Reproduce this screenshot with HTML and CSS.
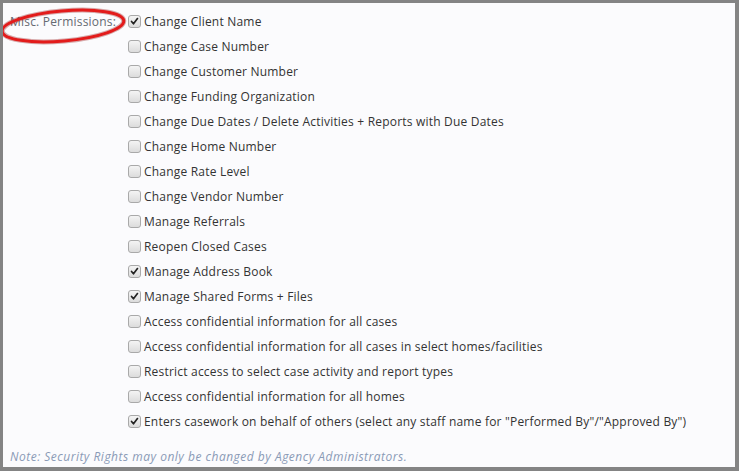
FILE: index.html
```html
<!DOCTYPE html>
<html>
<head>
<meta charset="utf-8">
<link rel="stylesheet" href="styles.css">
</head>
<body>
<div class="frame">
  <div class="perm">
    <div class="label">Misc. Permissions:</div>
    <ul class="list">
      <li><span class="cb on"><svg viewBox="0 0 13 13"><path d="M3 6.5 L5.3 9.2 L10 3" /></svg></span>Change Client Name</li>
      <li><span class="cb"></span>Change Case Number</li>
      <li><span class="cb"></span>Change Customer Number</li>
      <li><span class="cb"></span>Change Funding Organization</li>
      <li><span class="cb"></span>Change Due Dates / Delete Activities + Reports with Due Dates</li>
      <li><span class="cb"></span>Change Home Number</li>
      <li><span class="cb"></span>Change Rate Level</li>
      <li><span class="cb"></span>Change Vendor Number</li>
      <li><span class="cb"></span>Manage Referrals</li>
      <li><span class="cb"></span>Reopen Closed Cases</li>
      <li><span class="cb on"><svg viewBox="0 0 13 13"><path d="M3 6.5 L5.3 9.2 L10 3" /></svg></span>Manage Address Book</li>
      <li><span class="cb on"><svg viewBox="0 0 13 13"><path d="M3 6.5 L5.3 9.2 L10 3" /></svg></span>Manage Shared Forms + Files</li>
      <li><span class="cb"></span>Access confidential information for all cases</li>
      <li><span class="cb"></span>Access confidential information for all cases in select homes/facilities</li>
      <li><span class="cb"></span>Restrict access to select case activity and report types</li>
      <li><span class="cb"></span>Access confidential information for all homes</li>
      <li><span class="cb on"><svg viewBox="0 0 13 13"><path d="M3 6.5 L5.3 9.2 L10 3" /></svg></span>Enters casework on behalf of others (select any staff name for "Performed By"/"Approved By")</li>
    </ul>
  </div>
  <div class="note">Note: Security Rights may only be changed by Agency Administrators.</div>
  <svg class="circle" width="140" height="50" viewBox="0 0 140 50">
    <ellipse class="glow" cx="65" cy="26" rx="61" ry="15" transform="rotate(-5 65 26)" />
    <ellipse cx="65" cy="26" rx="61" ry="15" transform="rotate(-5 65 26)" />
  </svg>
</div>
</body>
</html>
```
FILE: styles.css
```css
html, body {
  margin: 0;
  padding: 0;
}
body {
  width: 739px;
  height: 471px;
  overflow: hidden;
  font-family: "Open Sans", "DejaVu Sans", sans-serif;
  font-size: 12px;
  color: #333;
}
.frame {
  position: relative;
  box-sizing: border-box;
  width: 739px;
  height: 471px;
  border-style: solid;
  border-color: #848484;
  border-width: 3px 4px 4px 3px;
  background: #fbfbfd;
  padding: 6px 0 0 7px;
  overflow: hidden;
}
.perm {
  display: flex;
}
.label {
  width: 118px;
  color: #666a72;
  line-height: 25px;
  height: 25px;
  margin-top: -0.5px;
  letter-spacing: 0.2px;
}
.list {
  list-style: none;
  margin: 0;
  padding: 0;
}
.list li {
  display: flex;
  align-items: center;
  height: 25px;
  white-space: nowrap;
  letter-spacing: 0.2px;
}
.cb {
  box-sizing: border-box;
  width: 13px;
  height: 13px;
  border: 1px solid #a9a9a9;
  border-radius: 3px;
  background: linear-gradient(#f4f4f4, #dcdcdc);
  margin-left: 0;
  margin-right: 3px;
  display: flex;
  align-items: center;
  justify-content: center;
}
.cb svg {
  width: 11px;
  height: 11px;
}
.cb svg path {
  fill: none;
  stroke: #222;
  stroke-width: 2;
  stroke-linecap: round;
  stroke-linejoin: round;
}
.note {
  margin-top: 15px;
  color: #8a9ab6;
  font-style: italic;
  line-height: 16px;
  letter-spacing: 0.5px;
}
.circle {
  position: absolute;
  left: -5px;
  top: -3px;
}
.circle ellipse {
  fill: none;
  stroke: #e31b1b;
  stroke-width: 3;
}
.circle ellipse.glow {
  stroke: rgba(150, 20, 20, 0.35);
  stroke-width: 5;
}
```
